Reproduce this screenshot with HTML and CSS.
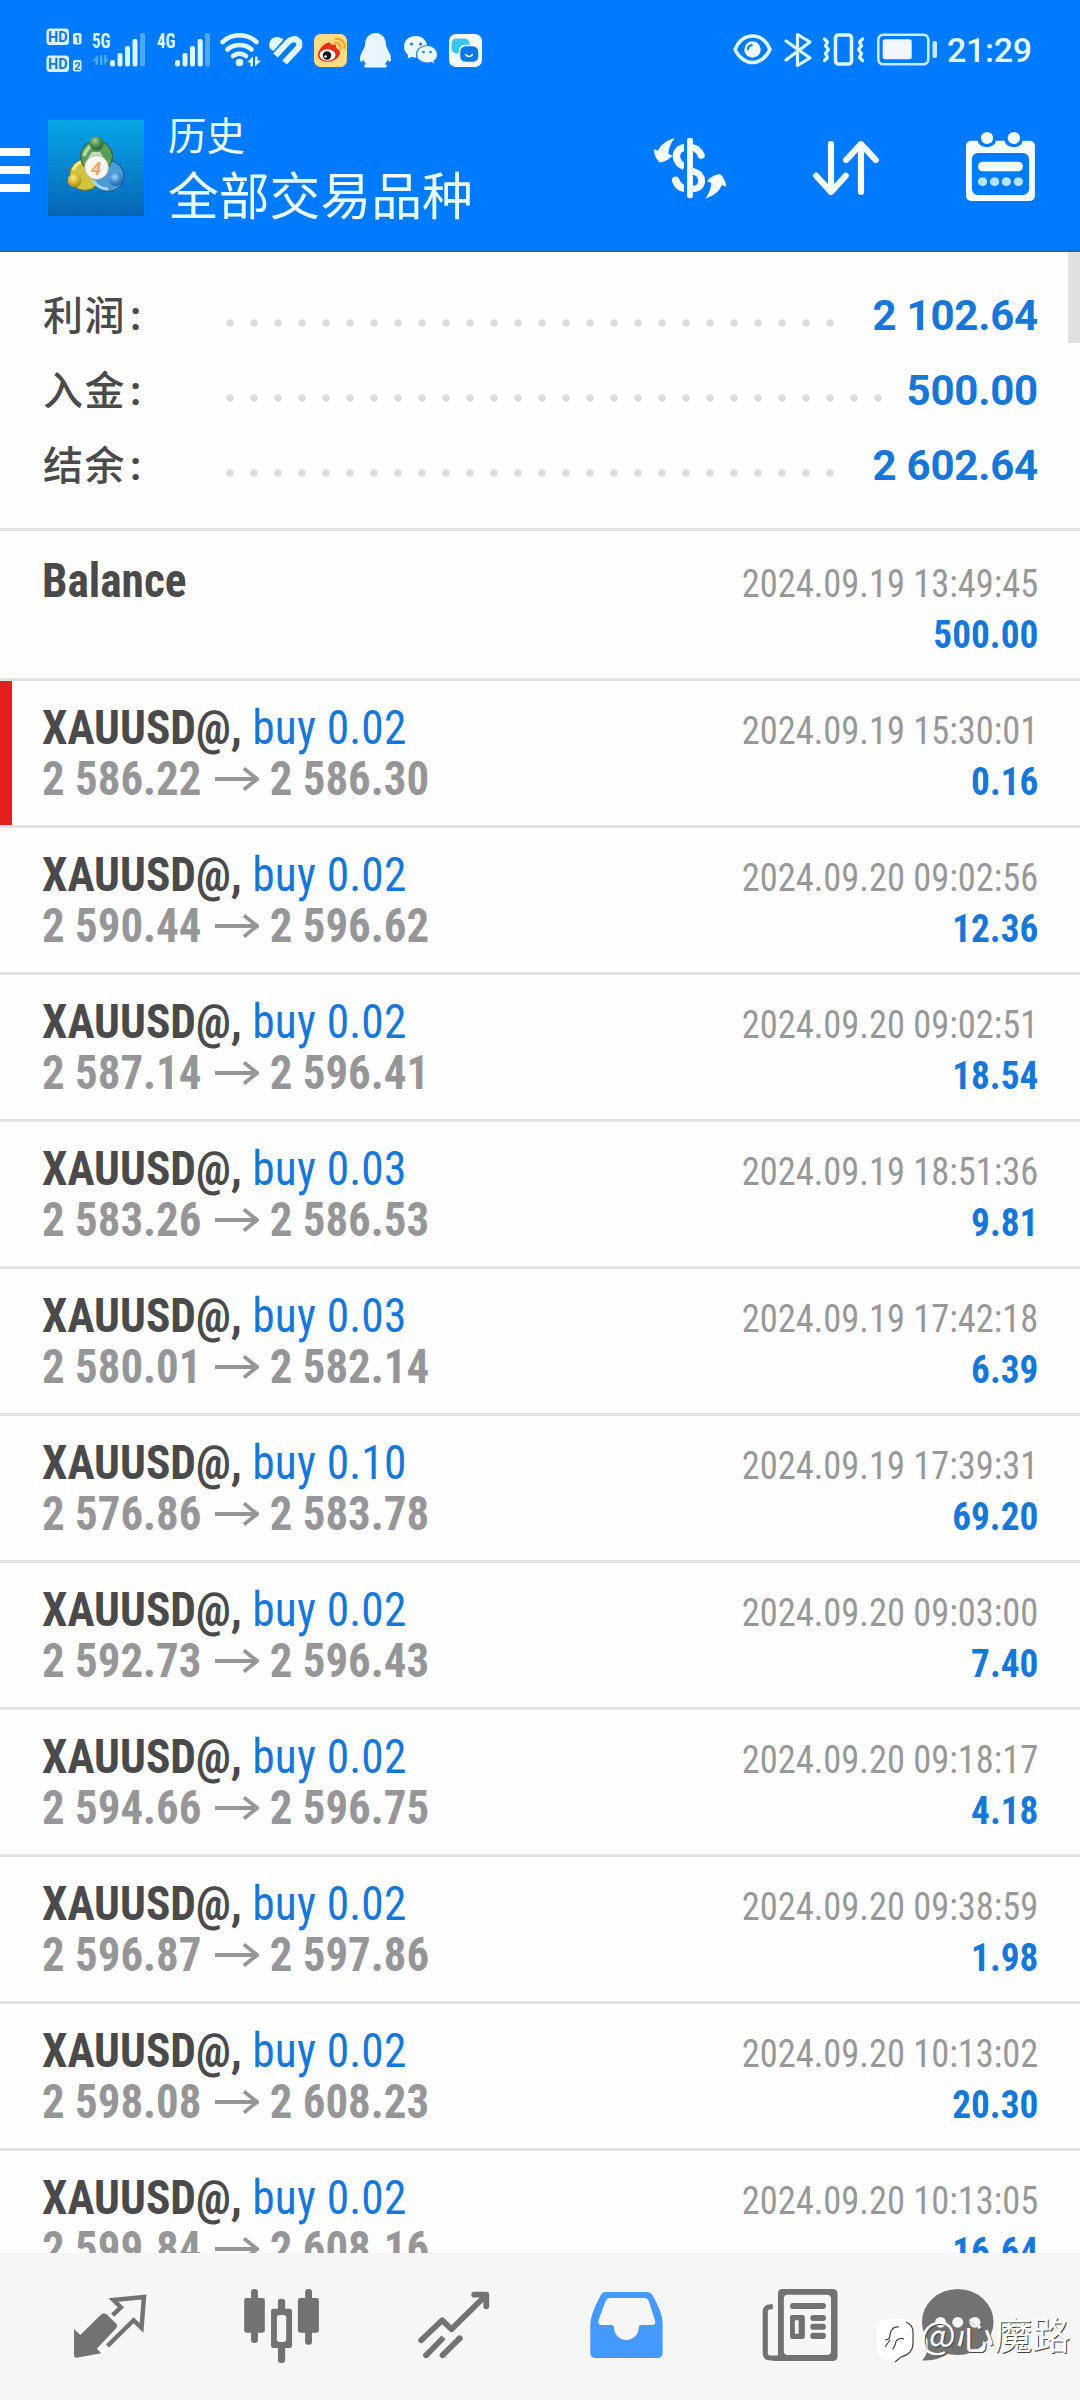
FILE: index.html
```html
<!DOCTYPE html>
<html lang="zh-CN">
<head>
<meta charset="utf-8">
<title>历史</title>
<link rel="stylesheet" href="styles.css">
</head>
<body>
<div class="screen">
  <header class="top">
    <div class="status">
      <svg class="st" width="88" height="100" viewBox="0 0 88 100">
        <g fill="#d6f4ff"><rect x="46.5" y="28.500" width="22.5" height="16.500" rx="3.5"/><rect x="73" y="33" width="8.5" height="11.5" rx="2"/><rect x="46.5" y="55.500" width="22.5" height="16.500" rx="3.5"/><rect x="73" y="60" width="8.5" height="11.5" rx="2"/></g>
        <g class="tiny"><text x="48" y="42" textLength="19.500" lengthAdjust="spacingAndGlyphs">HD</text><text x="48" y="69" textLength="19.500" lengthAdjust="spacingAndGlyphs">HD</text></g>
        <g class="tiny sm"><text x="74.2" y="42.6">1</text><text x="74.2" y="69.7">2</text></g>
      </svg>
      <svg class="st" width="62" height="100" viewBox="88 0 62 100">
        <text class="net" x="92" y="47.5" textLength="18.5" lengthAdjust="spacingAndGlyphs">5G</text>
        <g fill="#d9f6ff"><rect x="110" y="60" width="5" height="6.5" rx="2"/><rect x="117.5" y="53" width="5" height="13.5" rx="2"/><rect x="125" y="46" width="5" height="20.5" rx="2"/><rect x="132.5" y="39" width="5" height="27.5" rx="2"/></g>
        <rect x="140" y="33" width="5" height="33.500" rx="2" fill="#4ba8ff"/>
        <path fill="#4ba8ff" d="M92 61l6-6v10h-2.500v-4zM100 55h2.500v10h-2.500zM104 55v10l5-6h-2.500v-4z"/>
      </svg>
      <svg class="st" width="64" height="100" viewBox="150 0 64 100">
        <text class="net" x="157" y="47.500" textLength="18.5" lengthAdjust="spacingAndGlyphs">4G</text>
        <g fill="#d9f6ff"><rect x="175" y="60" width="5" height="6.500" rx="2"/><rect x="182.5" y="53" width="5" height="13.500" rx="2"/><rect x="190" y="46" width="5" height="20.500" rx="2"/><rect x="197.700" y="39" width="5" height="27.500" rx="2"/></g>
        <rect x="205" y="33" width="5" height="33.500" rx="2" fill="#4ba8ff"/>
      </svg>
      <svg class="st" width="50" height="100" viewBox="214 0 50 100">
        <g fill="none" stroke="#e0f8ff" stroke-width="4.600" stroke-linecap="round"><path d="M222.500 42C232 33 247 33 256.500 42"/><path d="M227.500 49.500C234 43.500 245 43.500 251.500 49.500"/><path d="M233 56C237 53 242 53 246 56"/></g>
        <circle cx="239.500" cy="62.500" r="3.800" fill="#e0f8ff"/>
        <path fill="#e0f8ff" d="M247 62.500l6-6v10h-2.500v-4zM255 56.500v10l6-6h-3.500v-4z"/>
      </svg>
      <svg class="st" width="46" height="100" viewBox="264 0 46 100">
        <path fill="#e0f8ff" d="M269 45C269.500 37 278 34.500 283.500 39.500L273.500 51C271 50 269 48 269 45z"/>
        <path fill="none" stroke="#e0f8ff" stroke-width="6.200" d="M275.500 55.500L288 42C294 35.500 303 41.500 298 48L284.500 62.500"/>
      </svg>
      <svg class="st" width="46" height="100" viewBox="310 0 46 100">
        <rect x="314" y="34" width="33" height="33" rx="6.500" fill="#ffdb86"/>
        <path fill="none" stroke="#f7a32b" stroke-width="2.200" stroke-linecap="round" d="M335 43c4-.5 6 2 5.500 5.500M335.500 39c6-.5 10 3.500 9 9"/>
        <path fill="#e1301c" d="M318 54c1-5 6-11 11-11.500 2-.2 2 1.500 2 2.500 4-1.500 6 0 5 3 4 1.500 5.500 5.500 2 9.500-4 4-11 5-15.500 3.500-3.500-1.200-5-4-4.500-7z"/>
        <ellipse cx="327.500" cy="55" rx="8" ry="5.800" fill="#fff"/><circle cx="327" cy="55.500" r="4.200" fill="#111"/><circle cx="325.500" cy="56.500" r="1.300" fill="#fff"/>
      </svg>
      <svg class="st" width="42" height="100" viewBox="356 0 42 100">
        <path fill="#e9f5ff" d="M375.500 33c6.500 0 10.500 5 10.500 12 0 3 5 8 5 14 0 3-1 4-3.500 1-.8 2-1.500 3-2.500 4 2 1 2.500 2 1 3.500h-21c-1.500-1.500-1-2.500 1-3.500-1-1-1.700-2-2.500-4-2.500 3-3.500 2-3.500-1 0-6 5-11 5-14 0-7 4-12 10.500-12z"/>
      </svg>
      <svg class="st" width="46" height="100" viewBox="398 0 46 100">
        <path fill="#eaf9ff" d="M415.500 36c7 0 11.500 4.500 11.500 10.500S422 57.500 415.500 57.500c-1.500 0-3-.3-4-.7l-4 2 .8-3.500c-2.600-2-4.300-5-4.300-8.500C404 40.500 409 36 415.500 36z"/>
        <path fill="#eaf9ff" stroke="#2585ee" stroke-width="1.200" d="M427 45.500c6 0 10.500 4 10.500 9 0 3-1.500 5-3.500 6.500l.7 3-3.500-1.600c-1.300.5-2.600.6-4.200.6-6 0-10.500-3.600-10.500-8.500s4.500-9 10.500-9z"/>
        <g fill="#2378c8"><circle cx="411.500" cy="44" r="1.500"/><circle cx="420.500" cy="44" r="1.500"/><circle cx="423.500" cy="52" r="1.300"/><circle cx="430.500" cy="52" r="1.300"/></g>
      </svg>
      <svg class="st" width="46" height="100" viewBox="444 0 46 100">
        <rect x="449" y="34" width="33" height="33" rx="7" fill="#fafdff"/><rect x="451.500" y="38.500" width="18" height="15" rx="5" fill="#3cc5ec"/>
        <rect x="459.500" y="45.500" width="19.500" height="17" rx="6" fill="#0878e8" stroke="#fff" stroke-width="1.500"/><path d="M465.500 54.500q3.500 4 7 0" fill="none" stroke="#fff" stroke-width="1.600" stroke-linecap="round"/>
      </svg>
      <svg class="st right" width="46" height="100" viewBox="730 0 46 100">
        <path d="M735 49.500C739 40 746 36 752.500 36s13.500 4 17.500 13.500c-4 8.500-11 13-17.500 13s-13.500-4.500-17.500-13z" fill="none" stroke="#d9fbff" stroke-width="3.600" stroke-linejoin="round"/><circle cx="752.500" cy="49.500" r="8.200" fill="#eefaff"/><path d="M747.800 49.500a5 5 0 0 1 4-4.500" stroke="#0a7bff" stroke-width="2" fill="none" stroke-linecap="round"/>
      </svg>
      <svg class="st" width="42" height="100" viewBox="776 0 42 100">
        <path d="M786 41l24 17-12.500 7.500v-31L810 42l-24 18" fill="none" stroke="#d9fbff" stroke-width="3.200" stroke-linejoin="round" stroke-linecap="round"/>
      </svg>
      <svg class="st" width="54" height="100" viewBox="818 0 54 100">
        <rect x="835.500" y="35" width="16" height="29" rx="3" fill="none" stroke="#d9fbff" stroke-width="3.600"/>
        <path d="M824.500 39l3 3-2 4 3 3.500-3 4 2 4-3 3M862.500 39l-3 3 2 4-3 3.500 3 4-2 4 3 3" fill="none" stroke="#d9fbff" stroke-width="3.200" stroke-linecap="round" stroke-linejoin="round"/>
      </svg>
      <svg class="st" width="74" height="100" viewBox="872 0 74 100">
        <rect x="878.300" y="34.800" width="50" height="29.500" rx="5" fill="none" stroke="#c8ecff" stroke-width="2.600"/><rect x="882.700" y="39.300" width="29" height="20" rx="2.500" fill="#f2f6ff"/><rect x="932.500" y="41" width="4.500" height="17" rx="2" fill="#c8ecff"/>
      </svg>
      <span class="clock">21:29</span>
    </div>
    <div class="bar">
      <span class="burger"><i></i><i></i><i></i></span>
      <svg class="logo" width="96" height="96" viewBox="0 0 96 96">
        <defs>
          <linearGradient id="bg" x1="0" y1="0" x2="0" y2="1"><stop offset="0" stop-color="#04a5e6"/><stop offset=".5" stop-color="#0785d0"/><stop offset="1" stop-color="#0464b4"/></linearGradient>
          <radialGradient id="gr" cx=".4" cy=".3" r=".8"><stop offset="0" stop-color="#a5cf95"/><stop offset=".5" stop-color="#458a4b"/><stop offset="1" stop-color="#1d5a34"/></radialGradient>
          <radialGradient id="ye" cx=".4" cy=".3" r=".8"><stop offset="0" stop-color="#f9ed8a"/><stop offset=".5" stop-color="#d5b52c"/><stop offset="1" stop-color="#8d7a1c"/></radialGradient>
          <radialGradient id="bl" cx=".4" cy=".3" r=".8"><stop offset="0" stop-color="#a3d5f5"/><stop offset=".5" stop-color="#3b8dcc"/><stop offset="1" stop-color="#145a9c"/></radialGradient>
        </defs>
        <rect width="96" height="96" fill="url(#bg)"/>
        <path stroke="#4cc4f4" stroke-opacity=".1" d="M10 0v96M22 0v96M34 0v96M46 0v96M58 0v96M70 0v96M82 0v96M0 10h96M0 22h96M0 34h96M0 46h96M0 58h96M0 70h96M0 82h96"/>
        <circle cx="37" cy="55" r="15.500" fill="#d3c23d" stroke="#6b6a28"/><path d="M25 50q4-9 13-9" fill="none" stroke="#f3ec8c" stroke-width="3"/>
        <circle cx="60.500" cy="56" r="15.500" fill="#4b9bd5" stroke="#174e84"/><path d="M45 60q5 9 15 9" fill="none" stroke="#a8d5ef" stroke-width="3"/>
        <circle cx="48.500" cy="36.500" r="16" fill="#5a9d57" stroke="#245d3a"/><path d="M36 36q3-9 9-11" fill="none" stroke="#b4dba5" stroke-width="3.500"/>
        <path d="M44 32l-4 6h16l-4-6z" fill="#c4dfbc"/>
        <circle cx="48.500" cy="23.500" r="7" fill="url(#gr)"/><circle cx="26.500" cy="60.500" r="6.800" fill="url(#ye)"/><circle cx="68" cy="59.500" r="6.800" fill="url(#bl)"/>
        <circle cx="48.500" cy="47.500" r="12" fill="#fbf7f3" stroke="#a6a89a" stroke-width=".8"/>
        <text class="four" x="48" y="54.500" text-anchor="middle">4</text>
      </svg>
      <div class="titles"><div class="t1">历史</div><div class="t2">全部交易品种</div></div>
      <svg class="act" width="114" height="152" viewBox="634 100 114 152">
        <g transform="translate(540 0) scale(.34439 .33333)" fill="#f4feff">
          <path d="M391 414C368 420 350 435 343 452L331 448C331 465 338 478 347 487C360 486 375 478 385 467L373 462C373 445 380 428 391 414z"/>
          <path d="M480 595C503 589 521 574 528 555L541 560C540 545 532 531 523 522C510 523 494 531 485 544L497 548C497 565 490 582 480 595z"/>
          <rect x="427" y="413" width="17" height="182" rx="8"/>
          <path d="M419 443C389 447 388 487 419 500" fill="none" stroke="#f4feff" stroke-width="22"/>
          <path d="M443 443C454 445 463 453 468 466" fill="none" stroke="#f4feff" stroke-width="21" stroke-linecap="round"/>
          <path d="M443 514C478 520 478 567 443 567" fill="none" stroke="#f4feff" stroke-width="20"/>
          <path d="M419 565C408 563 399 556 394 541" fill="none" stroke="#f4feff" stroke-width="22" stroke-linecap="round"/>
          <rect x="418" y="420" width="9" height="170" fill="#007bff"/>
        </g>
      </svg>
      <svg class="act" width="172" height="152" viewBox="748 100 172 152">
        <g transform="translate(540 0) scale(.34439 .33333)" fill="none" stroke="#f4feff" stroke-width="18" stroke-linecap="round" stroke-linejoin="round">
          <path d="M845 432V576M802 527L845 576L888 527M932 576V432M889 480L932 432L975 480"/>
        </g>
      </svg>
      <svg class="act" width="160" height="152" viewBox="920 100 160 152">
        <g transform="translate(540 0) scale(.34439 .33333)" fill="#f4feff">
          <rect x="1237" y="422" width="200" height="181" rx="15"/>
          <rect x="1271" y="395" width="53" height="46" rx="22" fill="#007bff"/><rect x="1349" y="395" width="53" height="46" rx="22" fill="#007bff"/>
          <circle cx="1298" cy="414" r="18"/><circle cx="1376" cy="414" r="18"/>
          <rect x="1254" y="459" width="166" height="126" rx="18" fill="#007bff"/>
          <rect x="1272" y="485" width="130" height="29" rx="13"/>
          <g fill="#b5e2ff"><circle cx="1285" cy="545" r="13.500"/><circle cx="1320" cy="545" r="13.500"/><circle cx="1354" cy="545" r="13.500"/><circle cx="1389" cy="545" r="13.500"/></g>
        </g>
      </svg>
    </div>
  </header>

  <main class="content">
    <section class="summary">
      <div class="sum"><span class="label">利润<b>:</b></span><span class="dots"></span><span class="value">2 102.64</span></div>
      <div class="sum"><span class="label">入金<b>:</b></span><span class="dots"></span><span class="value">500.00</span></div>
      <div class="sum"><span class="label">结余<b>:</b></span><span class="dots"></span><span class="value">2 602.64</span></div>
    </section>
    <section class="list">
      <article class="row"><div class="left"><p class="name">Balance</p></div><div class="info"><time>2024.09.19 13:49:45</time><strong>500.00</strong></div></article>
      <article class="row marked"><div class="left"><p class="name">XAUUSD@, <span>buy 0.02</span></p><p class="price">2 586.22<svg class="arrow" viewBox="0 0 47 24"><path d="M0 12H45M31 1.500L45 12L31 22.500"/></svg>2 586.30</p></div><div class="info"><time>2024.09.19 15:30:01</time><strong>0.16</strong></div></article>
      <article class="row"><div class="left"><p class="name">XAUUSD@, <span>buy 0.02</span></p><p class="price">2 590.44<svg class="arrow" viewBox="0 0 47 24"><path d="M0 12H45M31 1.500L45 12L31 22.500"/></svg>2 596.62</p></div><div class="info"><time>2024.09.20 09:02:56</time><strong>12.36</strong></div></article>
      <article class="row"><div class="left"><p class="name">XAUUSD@, <span>buy 0.02</span></p><p class="price">2 587.14<svg class="arrow" viewBox="0 0 47 24"><path d="M0 12H45M31 1.500L45 12L31 22.500"/></svg>2 596.41</p></div><div class="info"><time>2024.09.20 09:02:51</time><strong>18.54</strong></div></article>
      <article class="row"><div class="left"><p class="name">XAUUSD@, <span>buy 0.03</span></p><p class="price">2 583.26<svg class="arrow" viewBox="0 0 47 24"><path d="M0 12H45M31 1.500L45 12L31 22.500"/></svg>2 586.53</p></div><div class="info"><time>2024.09.19 18:51:36</time><strong>9.81</strong></div></article>
      <article class="row"><div class="left"><p class="name">XAUUSD@, <span>buy 0.03</span></p><p class="price">2 580.01<svg class="arrow" viewBox="0 0 47 24"><path d="M0 12H45M31 1.500L45 12L31 22.500"/></svg>2 582.14</p></div><div class="info"><time>2024.09.19 17:42:18</time><strong>6.39</strong></div></article>
      <article class="row"><div class="left"><p class="name">XAUUSD@, <span>buy 0.10</span></p><p class="price">2 576.86<svg class="arrow" viewBox="0 0 47 24"><path d="M0 12H45M31 1.500L45 12L31 22.500"/></svg>2 583.78</p></div><div class="info"><time>2024.09.19 17:39:31</time><strong>69.20</strong></div></article>
      <article class="row"><div class="left"><p class="name">XAUUSD@, <span>buy 0.02</span></p><p class="price">2 592.73<svg class="arrow" viewBox="0 0 47 24"><path d="M0 12H45M31 1.500L45 12L31 22.500"/></svg>2 596.43</p></div><div class="info"><time>2024.09.20 09:03:00</time><strong>7.40</strong></div></article>
      <article class="row"><div class="left"><p class="name">XAUUSD@, <span>buy 0.02</span></p><p class="price">2 594.66<svg class="arrow" viewBox="0 0 47 24"><path d="M0 12H45M31 1.500L45 12L31 22.500"/></svg>2 596.75</p></div><div class="info"><time>2024.09.20 09:18:17</time><strong>4.18</strong></div></article>
      <article class="row"><div class="left"><p class="name">XAUUSD@, <span>buy 0.02</span></p><p class="price">2 596.87<svg class="arrow" viewBox="0 0 47 24"><path d="M0 12H45M31 1.500L45 12L31 22.500"/></svg>2 597.86</p></div><div class="info"><time>2024.09.20 09:38:59</time><strong>1.98</strong></div></article>
      <article class="row"><div class="left"><p class="name">XAUUSD@, <span>buy 0.02</span></p><p class="price">2 598.08<svg class="arrow" viewBox="0 0 47 24"><path d="M0 12H45M31 1.500L45 12L31 22.500"/></svg>2 608.23</p></div><div class="info"><time>2024.09.20 10:13:02</time><strong>20.30</strong></div></article>
      <article class="row"><div class="left"><p class="name">XAUUSD@, <span>buy 0.02</span></p><p class="price">2 599.84<svg class="arrow" viewBox="0 0 47 24"><path d="M0 12H45M31 1.500L45 12L31 22.500"/></svg>2 608.16</p></div><div class="info"><time>2024.09.20 10:13:05</time><strong>16.64</strong></div></article>
    </section>
    <div class="scroll"></div>
  </main>

  <nav class="tabs">
    <svg width="173" height="147" viewBox="24 2253 173 147">
      <g transform="translate(0 2200) scale(.34439 .33333)">
        <path fill="#727272" d="M215 387L233 405L293 344Q302 335 311 344L336 370Q344 378 336 386L281 446L294 460L222 473Q215 474 215 465z"/>
        <path fill="none" stroke="#727272" stroke-width="13" d="M327 346L351 322L329 300L418 291L411 384L388 361L312 438"/>
      </g>
    </svg>
    <svg width="173" height="147" viewBox="197 2253 173 147">
      <g transform="translate(0 2200) scale(.34439 .33333)" fill="#727272">
        <rect x="709" y="294" width="60" height="104" rx="7"/><rect x="729" y="267" width="20" height="162" rx="9"/>
        <rect x="865" y="294" width="61" height="104" rx="7"/><rect x="886" y="267" width="20" height="167" rx="9"/>
        <rect x="787" y="326" width="61" height="118" rx="7"/><rect x="807" y="296" width="21" height="193" rx="9"/>
        <rect x="804" y="345" width="27" height="81" rx="8" fill="#f6f6f6"/>
      </g>
    </svg>
    <svg width="173" height="147" viewBox="370 2253 173 147">
      <g transform="translate(0 2200) scale(.34439 .33333)" fill="none" stroke="#727272" stroke-width="17" stroke-linejoin="round" stroke-linecap="round">
        <path d="M1223 421L1284 361L1311 388L1411 286M1377 284H1412V319" /><path stroke-linecap="butt" d="M1237 466L1288 412M1285 466L1338 412"/><path d="M1237 466l3-3M1285 466l3-3M1335 415l-3 3"/>
      </g>
    </svg>
    <svg width="173" height="147" viewBox="543 2253 173 147">
      <g transform="translate(540 2200) scale(.34439 .33333)">
        <path fill="#449aff" fill-rule="evenodd" d="M190 276H310Q322 276 328 288C344 320 356 342 356 374V458Q356 474 340 474H162Q146 474 146 458V374C148 342 162 315 175 288Q180 276 190 276zM203 294Q195 294 191 302L170 360Q166 375 180 375H207Q214 375 215 384C218 432 285 432 287 382Q287 375 294 375H326Q338 375 334 362L316 303Q312 294 304 294z"/>
      </g>
    </svg>
    <svg width="173" height="147" viewBox="716 2253 173 147">
      <g transform="translate(540 2200) scale(.34439 .33333)">
        <path fill="none" stroke="#727272" stroke-width="15" d="M676 320H670Q654 320 654 336V458Q654 474 670 474H695"/>
        <path fill="#727272" fill-rule="evenodd" d="M704 267H850Q864 267 864 281V469Q864 483 850 483H665Q690 483 691 465V281Q691 267 704 267zM720 284Q708 284 708 296V453Q708 465 720 465H833Q845 465 845 453V296Q845 284 833 284z"/>
        <g fill="#727272"><rect x="726" y="309" width="104" height="18" rx="8"/><path fill-rule="evenodd" d="M732 345H762Q769 345 769 352V410Q769 417 762 417H733Q726 417 726 410V352Q726 345 732 345zM740 361V401H751V361z"/><rect x="785" y="345" width="45" height="18" rx="8"/><rect x="785" y="371" width="45" height="18" rx="8"/><rect x="785" y="398" width="45" height="19" rx="8"/></g>
      </g>
    </svg>
    <svg width="191" height="147" viewBox="889 2253 191 147">
      <g transform="translate(540 2200) scale(.34439 .33333)" fill="#727272">
        <ellipse cx="1213" cy="366" rx="104" ry="99"/><path d="M1125 420Q1130 460 1110 481Q1150 485 1190 458z"/>
        <g fill="#f8f8f8"><circle cx="1163" cy="367" r="16"/><circle cx="1213" cy="367" r="16"/><circle cx="1263" cy="367" r="16"/></g>
      </g>
    </svg>
    <div class="mark">
      <svg width="44" height="48" viewBox="874 2317 44 48">
        <path fill="#fff" d="M886 2319h16q11 1 11 12v14q0 11-12 13l-6 5-4-5h-6q-8-1-8-11v-18q0-9 9-10z"/>
        <path fill="none" stroke="#444" stroke-width="1.200" d="M906 2322q7 3 7 10v11q0 11-12 14l-6 5M885 2347l5-7M885 2340l4-1 2-8q3-5 8-4M896 2341q4-4 8-2M896 2341q-1 7-4 8"/>
      </svg>
      <span>@心魔路</span>
    </div>
  </nav>
</div>
</body>
</html>
```
FILE: styles.css
```css
* { box-sizing: border-box; }
body { margin: 0; background: #fff; font-family: Roboto, "Noto Sans CJK SC", sans-serif; }
p { margin: 0; }
svg { display: block; flex: none; }
.screen { width: 1080px; height: 2400px; display: flex; flex-direction: column; overflow: hidden; }

.top { height: 252px; flex: none; background: #007bff; border-bottom: 2px solid #1668bd; }
.status { height: 100px; display: flex; }
.status .right { margin-left: auto; }
.clock { width: 134px; padding-left: 1px; font-size: 34px; font-weight: 500; letter-spacing: -.3px; line-height: 100px; color: #e3fbff; }
.tiny { font: 700 15px Roboto, sans-serif; fill: #1976d2; }
.tiny.sm { font-size: 11px; }
.net { font: 700 20.500px "Roboto Condensed", Roboto, sans-serif; fill: #d9f6ff; }
.bar { height: 150px; display: flex; align-items: flex-start; }
.burger { width: 48px; padding-top: 48px; display: flex; flex-direction: column; gap: 10px; }
.burger i { width: 30px; height: 8px; background: #fff; }
.logo { margin-top: 20px; }
.four { font: italic 700 19px Roboto, sans-serif; fill: #f3a36c; }
.titles { margin-left: 24px; color: #e9fdff; flex: 1; white-space: nowrap; }
.t1 { font-size: 38.500px; line-height: 56px; margin-top: 9px; }
.t2 { font-size: 50.800px; line-height: 66px; }

.content { position: relative; height: 2001px; flex: none; overflow: hidden; background: #fefefe; }
.summary { height: 279px; padding: 26px 42px 0 43px; border-bottom: 3px solid #e3e3e3; }
.sum { height: 75px; display: flex; align-items: center; }
.label { width: 183px; padding-top: 2px; font-size: 40px; letter-spacing: 1.500px; color: #4a4a4a; font-weight: 500; line-height: 73px; }
.label b { margin-left: 4px; }
.dots { flex: 1; height: 8px; margin: 15px 25px 0 0; background: radial-gradient(circle at 4px 4px, #dcdcdc 3.300px, transparent 4.200px) 0 0 / 24px 8px repeat-x; }
.value { font-size: 42px; font-weight: 700; letter-spacing: -.2px; color: #1777d8; }

.list { padding-top: 3px; }
.row { height: 147px; padding: 0 42px; display: flex; justify-content: space-between; border-bottom: 3px solid #e3e3e3; font-family: "Roboto Condensed", Roboto, sans-serif; font-stretch: condensed; line-height: 51px; white-space: nowrap; }
.marked { box-shadow: inset 12px 0 #e2201d; }
.left { padding-top: 21px; font-size: 48px; font-weight: 700; }
.name { color: #4a4a4a; transform: scaleX(.945); transform-origin: left; }
.name span { color: #1777d8; font-weight: 400; letter-spacing: .2px; }
.price { display: flex; align-items: center; color: #969698; transform: scaleX(.935); transform-origin: left; }
.arrow { width: 47px; height: 24px; margin: 0 12px 0 14px; fill: none; stroke: #969698; stroke-width: 4; }
.info { padding-top: 24px; display: flex; flex-direction: column; align-items: flex-end; font-size: 39.500px; color: #989898; }
.info time { transform: scaleX(.923); transform-origin: right; }
.info strong { color: #1777d8; font-weight: 700; transform: scaleX(.943); transform-origin: right; }
.scroll { position: absolute; right: 0; top: 0; width: 12px; height: 91px; background: #e0e0e0; }

.tabs { position: relative; height: 147px; flex: none; display: flex; padding-left: 24px; background: #f6f6f6; }
.mark { position: absolute; left: 874px; top: 64px; display: flex; align-items: center; color: #fff; font-family: "Noto Sans CJK SC", sans-serif; font-weight: 400; font-size: 38px; line-height: 48px; white-space: nowrap; text-shadow: 1px 1px 0 #444; }
.mark span { margin: -16px 0 0 2px; }
```
